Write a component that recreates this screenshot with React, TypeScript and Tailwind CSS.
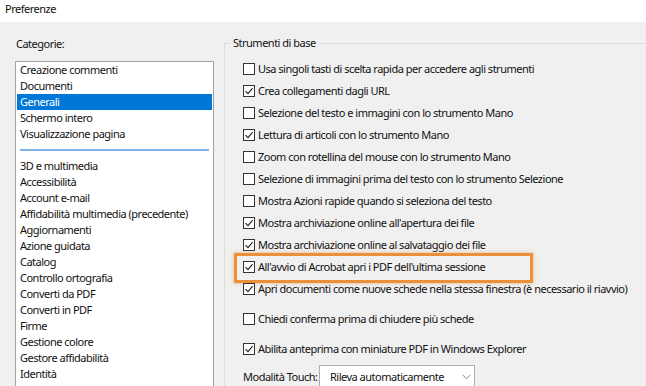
import React from "react"

const categoriesTop = ["Creazione commenti", "Documenti", "Generali", "Schermo intero", "Visualizzazione pagina"]

const categoriesRest = [
  "3D e multimedia",
  "Accessibilità",
  "Account e-mail",
  "Affidabilità multimedia (precedente)",
  "Aggiornamenti",
  "Azione guidata",
  "Catalog",
  "Controllo ortografia",
  "Converti da PDF",
  "Converti in PDF",
  "Firme",
  "Gestione colore",
  "Gestore affidabilità",
  "Identità",
  "Internet",
  "JavaScript",
]

const options = [
  { label: "Usa singoli tasti di scelta rapida per accedere agli strumenti", checked: false },
  { label: "Crea collegamenti dagli URL", checked: true },
  { label: "Selezione del testo e immagini con lo strumento Mano", checked: false },
  { label: "Lettura di articoli con lo strumento Mano", checked: true },
  { label: "Zoom con rotellina del mouse con lo strumento Mano", checked: false },
  { label: "Selezione di immagini prima del testo con lo strumento Selezione", checked: false },
  { label: "Mostra Azioni rapide quando si seleziona del testo", checked: false },
  { label: "Mostra archiviazione online all'apertura dei file", checked: true },
  { label: "Mostra archiviazione online al salvataggio dei file", checked: true },
  { label: "All'avvio di Acrobat apri i PDF dell'ultima sessione", checked: true, highlight: true },
  { label: "Apri documenti come nuove schede nella stessa finestra (è necessario il riavvio)", checked: true },
]

const extraOptions = [
  { label: "Chiedi conferma prima di chiudere più schede", checked: false },
  { label: "Abilita anteprima con miniature PDF in Windows Explorer", checked: true },
]

function CheckBox({ checked }: { checked: boolean }) {
  return (
    <span className="w-[12px] h-[12px] border border-[#333333] bg-white flex items-center justify-center shrink-0">
      {checked && (
        <svg width="10" height="10" viewBox="0 0 10 10">
          <path d="M1.5 5.2 L4 7.6 L8.6 2.2" fill="none" stroke="#222" strokeWidth="1.1" />
        </svg>
      )}
    </span>
  )
}

function OptionRow({ label, checked, highlight }: { label: string; checked: boolean; highlight?: boolean }) {
  return (
    <div className="relative h-[22px] flex items-center gap-[3px]">
      {highlight && (
        <div className="absolute left-[-9px] top-[-3px] w-[299px] h-[30px] border-[3px] border-[#e8913a] shadow-[0_0_4px_rgba(232,145,58,0.6)]"></div>
      )}
      <CheckBox checked={checked} />
      <span className="whitespace-nowrap">{label}</span>
    </div>
  )
}

export default function App() {
  return (
    <div className="w-[646px] h-[386px] overflow-hidden bg-[#f0f0f0] text-[11px] tracking-[-0.5px] leading-[16px] text-[#111] font-['Noto_Sans',sans-serif]">
      <div className="h-[22px] bg-white pl-[5px] pt-[1px]">Preferenze</div>

      <div className="flex">
        {/* categorie */}
        <div className="ml-[15px] w-[199px] shrink-0">
          <div className="mt-[14px] pl-[1px]">Categorie:</div>
          <div className="mt-[9px] h-[400px] border border-[#a3a3a3] bg-white">
            {categoriesTop.map((c) => (
              <div
                key={c}
                className={
                  c === "Generali"
                    ? "h-[16px] mx-px pl-[3px] bg-[#0078d7] text-white whitespace-nowrap"
                    : "h-[16px] mx-px pl-[3px] whitespace-nowrap"
                }
              >
                {c}
              </div>
            ))}
            <div className="h-[16px] flex items-center">
              <div className="h-[2px] w-full mx-[4px] bg-[#7fb2e5]"></div>
            </div>
            {categoriesRest.map((c) => (
              <div key={c} className="h-[16px] mx-px pl-[3px] whitespace-nowrap">
                {c}
              </div>
            ))}
          </div>
        </div>

        {/* strumenti di base */}
        <div className="relative ml-[10px] mt-[21px] flex-1 h-[400px] border-l border-t border-[#dcdcdc] pl-[18px] pt-[14px]">
          <span className="absolute top-[-9px] left-[5px] px-[3px] bg-[#f0f0f0]">Strumenti di base</span>
          {options.map((o) => (
            <OptionRow key={o.label} label={o.label} checked={o.checked} highlight={o.highlight} />
          ))}
          {extraOptions.map((o) => (
            <div key={o.label} className="mt-[8px]">
              <OptionRow label={o.label} checked={o.checked} />
            </div>
          ))}
          <div className="mt-[5px] flex items-center">
            <span className="w-[76px] whitespace-nowrap">Modalità Touch:</span>
            <div className="w-[156px] h-[24px] border border-[#adadad] bg-white flex items-center">
              <span className="flex-1 pl-[10px] whitespace-nowrap">Rileva automaticamente</span>
              <span className="w-[16px] h-full flex items-center justify-center">
                <svg width="9" height="6" viewBox="0 0 9 6">
                  <path d="M0.5 0.8 L4.5 4.8 L8.5 0.8" fill="none" stroke="#8a8a8a" strokeWidth="1" />
                </svg>
              </span>
            </div>
          </div>
        </div>
      </div>
    </div>
  )
}
